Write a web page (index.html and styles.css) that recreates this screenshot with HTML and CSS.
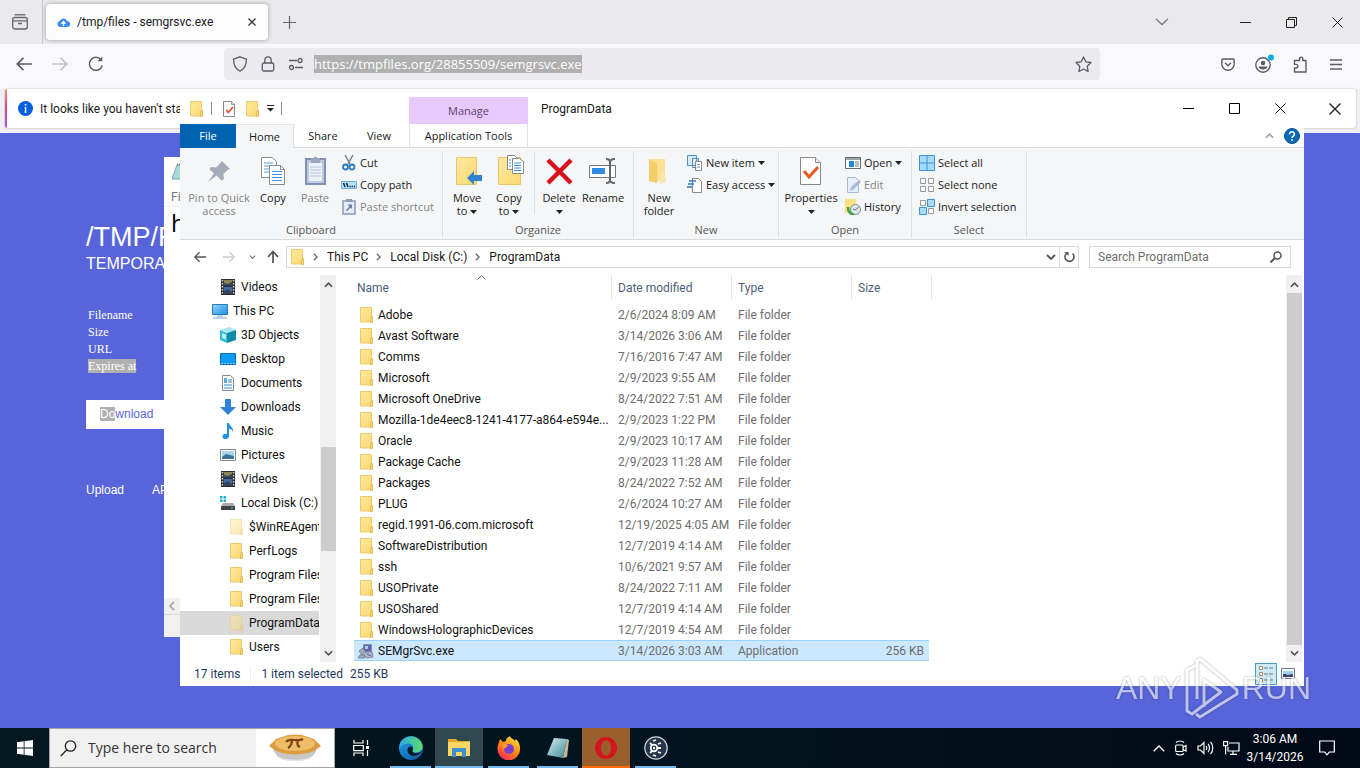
FILE: index.html
```html
<!DOCTYPE html>
<html lang="en">
<head>
<meta charset="utf-8">
<title>Desktop</title>
<link rel="stylesheet" href="styles.css">
</head>
<body>
<svg class="defs" width="0" height="0" aria-hidden="true">
  <defs>
    <linearGradient id="gFold" x1="0" y1="0" x2="1" y2="1"><stop offset="0" stop-color="#ffe9a2"/><stop offset="1" stop-color="#fbd970"/></linearGradient>
    <linearGradient id="gEdge" x1="0" y1="0" x2="1" y2="1"><stop offset="0" stop-color="#1b9de2"/><stop offset="1" stop-color="#0c59a4"/></linearGradient>
    <linearGradient id="gEdge2" x1="0" y1="0" x2="1" y2="0"><stop offset="0" stop-color="#2aa9e8"/><stop offset="1" stop-color="#5fdc6a"/></linearGradient>
    <linearGradient id="gFox" x1="0.8" y1="0" x2="0.2" y2="1"><stop offset="0" stop-color="#ffe040"/><stop offset=".5" stop-color="#ff8a16"/><stop offset="1" stop-color="#f5225c"/></linearGradient>
    <linearGradient id="gScr" x1="0" y1="0" x2="1" y2="1"><stop offset="0" stop-color="#8fd4ff"/><stop offset="1" stop-color="#1d8fe6"/></linearGradient>
    <linearGradient id="gNote" x1="0" y1="0" x2="1" y2="1"><stop offset="0" stop-color="#e2f4f4"/><stop offset=".5" stop-color="#86bcc4"/><stop offset="1" stop-color="#3d8490"/></linearGradient>
    <symbol id="folder" viewBox="0 0 16 16"><path d="M2.500.5h11v14.500h-11z" fill="url(#gFold)" stroke="#ecca6c"/><path d="M12.500 15.500v-4l1-2h1v6z" fill="#f9d974" stroke="#dcb44c" stroke-width=".8"/></symbol>
    <symbol id="check" viewBox="0 0 16 16"><path d="M2.500.5h8l3 3v12h-11z" fill="#fff" stroke="#888"/><path d="M10.500.5v3h3" fill="none" stroke="#999"/><path d="M5 9l2.300 2.500L12 6" fill="none" stroke="#e0562a" stroke-width="1.800"/></symbol>
    <symbol id="film" viewBox="0 0 16 16"><path d="M1 0h14v16H1z" fill="#2d2d30"/><path d="M4 1h8v6H4z" fill="#8a8552"/><path d="M4 8h8v7H4z" fill="#3d6ba8"/><path d="M4 4l4 1 4-2v4H4zM4 12l4-2 4 3v2H4z" fill="#34435c"/><path d="M2.500 1v15M13.500 1v15" stroke="#ddd" stroke-width="1.400" stroke-dasharray="1.500 1.500"/></symbol>
    <symbol id="pc" viewBox="0 0 16 16"><path d="M.5 1.500h15v10H.5z" fill="url(#gScr)" stroke="#2b7cb8"/><path d="M1 15h14M5 13h6" stroke="#6fa5c8" fill="none"/></symbol>
    <symbol id="cube" viewBox="0 0 16 16"><path d="M0 3l9-3 7 3-7 3z" fill="#a7e8f2"/><path d="M0 3l7 3v10l-7-3z" fill="#39b9d3"/><path d="M16 3L7 6v10l9-3z" fill="#0f8ca8"/><path d="M2 6l4 1.500v5L2 11z" fill="#b5f1f7"/></symbol>
    <symbol id="desk" viewBox="0 0 16 16"><path d="M.5 2.500h15v11H.5z" fill="#109af5" stroke="#0870bd"/><path d="M1 12.500h14" stroke="#7fd0ff" stroke-dasharray="2 1"/></symbol>
    <symbol id="doc" viewBox="0 0 16 16"><path d="M2.500.5h8l3 3v12h-11z" fill="#fff" stroke="#888"/><path d="M8 5h4M8 7h4M4 10h8M4 13h8" stroke="#2b88c8"/><path d="M4 3h3v5H4z" fill="#6ba7d0"/></symbol>
    <symbol id="down" viewBox="0 0 16 16"><path d="M5 0h6v8h5l-8 8-8-8h5z" fill="#2f83d6"/></symbol>
    <symbol id="music" viewBox="0 0 16 16"><path d="M7 0h2c0 3 5 4 4 9-.5-2-2-3-4-3.500V13c0 4-7 4-6.500.5C2.800 11 5 10.500 7 11z" fill="#2590dc"/></symbol>
    <symbol id="pic" viewBox="0 0 16 16"><path d="M.5 2.500h15v11H.5z" fill="#fff" stroke="#888"/><path d="M2 4h12v8H2z" fill="#a7d8ee"/><path d="M2 10l4-3 8 2v3H2z" fill="#3c7694"/></symbol>
    <symbol id="disk" viewBox="0 0 16 16"><path d="M0 1h2.500v2.500H0zM3.500 1H6v2.500H3.500zM0 4.500h2.500V7H0zM3.500 4.500H6V7H3.500z" fill="#19b0d6"/><path d="M3 8h10l2 3H1z" fill="#a9adb0"/><path d="M1 11h14v4H1z" fill="#3f4448"/><path d="M11 13h2" stroke="#5fe07a"/></symbol>
    <symbol id="exe" viewBox="0 0 16 16"><path d="M5.500 1.500h8v7h-8z" fill="#5869b5" stroke="#8990a5"/><path d="M7 3h3v3H7z" fill="#b8c9f2"/><path d="M1 8l4-3 2 3-3 4zM2 12h5v3H0z" fill="#a4aebc" stroke="#606c85" stroke-width=".7"/><path d="M8 9h6l1 5-6 1-3-3z" fill="#b4b9c8" stroke="#69748d" stroke-width=".8"/><path d="M9 11l4 2" stroke="#4761a3"/></symbol>
    <symbol id="car" viewBox="0 0 7 4"><path d="M0 0h7L3.500 4z" fill="#222"/></symbol>
    <symbol id="up" viewBox="0 0 10 6"><path d="M1 5l4-4 4 4" fill="none" stroke="currentColor" stroke-width="1.800"/></symbol>
    <symbol id="dn" viewBox="0 0 10 6"><path d="M1 1l4 4 4-4" fill="none" stroke="currentColor" stroke-width="1.800"/></symbol>
    <symbol id="rt" viewBox="0 0 6 10"><path d="M1 1l4 4-4 4" fill="none" stroke="currentColor" stroke-width="1.600"/></symbol>
    <symbol id="larr" viewBox="0 0 16 16"><path d="M15 8H2M7.500 2.500L2 8l5.500 5.500" fill="none" stroke="currentColor" stroke-width="1.500"/></symbol>
    <symbol id="rarr" viewBox="0 0 16 16"><path d="M1 8h13M8.500 2.500L14 8l-5.500 5.500" fill="none" stroke="currentColor" stroke-width="1.500"/></symbol>
  </defs>
</svg>

<main class="desktop">
  <section class="browser" aria-label="Browser">
    <header class="tabbar">
      <button class="recent" aria-label="Recent browsing"><svg width="16" height="16" viewBox="0 0 16 16" fill="none" stroke="#66666e" stroke-width="1.300"><path d="M2.500.8h11"/><rect x=".7" y="3.500" width="14.600" height="11.500" rx="2"/><path d="M.7 6.800h14.600M6 9.500h4"/></svg></button>
      <div class="tab">
        <svg width="13" height="10" viewBox="0 0 13 10"><path d="M3 10a3 3 0 01-.3-5.900A4 4 0 0110.200 4 3 3 0 0110 10z" fill="#3b8df2"/><path d="M6.500 9V4.500M4.500 6.500l2-2 2 2" stroke="#fff" fill="none" stroke-width="1.300"/></svg>
        <span>/tmp/files - semgrsvc.exe</span>
        <button aria-label="Close tab"><svg width="8" height="8" viewBox="0 0 8 8"><path d="M.5.5l7 7M7.500.5l-7 7" stroke="#333" stroke-width="1.300"/></svg></button>
      </div>
      <button class="newtab" aria-label="New tab"><svg width="13" height="13" viewBox="0 0 13 13"><path d="M6.500 0v13M0 6.500h13" stroke="#66666e" stroke-width="1.200"/></svg></button>
      <button class="alltabs" aria-label="List all tabs"><svg width="14" height="8" viewBox="0 0 14 8"><path d="M1 1l6 5.500L13 1" fill="none" stroke="#77777f" stroke-width="1.300"/></svg></button>
      <div class="winctl">
        <button aria-label="Minimize"><svg width="11" height="11"><path d="M0 5.500h11" stroke="#222"/></svg></button>
        <button aria-label="Restore"><svg width="11" height="11" fill="none" stroke="#222"><path d="M.5 2.500h8v8h-8zM2.500 2V.5h8v8H9"/></svg></button>
        <button aria-label="Close"><svg width="11" height="11"><path d="M.5.5l10 10M10.500.5l-10 10" stroke="#222"/></svg></button>
      </div>
    </header>
    <div class="navbar">
      <button class="nb" aria-label="Back"><svg width="18" height="18"><use href="#larr"/></svg></button>
      <button class="nb off" aria-label="Forward"><svg width="18" height="18"><use href="#rarr"/></svg></button>
      <button class="nb" aria-label="Reload"><svg width="16" height="16" viewBox="0 0 16 16" fill="none" stroke="currentColor" stroke-width="1.500"><path d="M14.200 9.500A6.500 6.500 0 1113 3.700"/><path d="M14.300.5v4.800H9.500z" fill="currentColor" stroke="none"/></svg></button>
      <div class="urlbar">
        <svg width="16" height="16" viewBox="0 0 16 16" fill="none" stroke="currentColor" stroke-width="1.300"><path d="M8 .8l6.500 2.300c0 6-1.500 9.500-6.500 12.200C3 12.600 1.500 9.100 1.500 3.100z"/></svg>
        <svg width="16" height="16" viewBox="0 0 16 16" fill="none" stroke="currentColor" stroke-width="1.300"><rect x="2.300" y="7" width="11.400" height="8" rx="1.500"/><path d="M4.800 7V4a3.200 3.200 0 016.400 0v3"/></svg>
        <svg width="16" height="16" viewBox="0 0 16 16" fill="none" stroke="currentColor" stroke-width="1.300"><path d="M1 4.500h8M7 11.500h8"/><circle cx="12" cy="4.500" r="2"/><circle cx="3.500" cy="11.500" r="2"/></svg>
        <input class="url" type="text" aria-label="Address" value="https://tmpfiles.org/28855509/semgrsvc.exe">
        <button class="star" aria-label="Bookmark"><svg width="17" height="17" viewBox="0 0 17 17" fill="none" stroke="currentColor" stroke-width="1.300" stroke-linejoin="round"><path d="M8.500 1l2.300 4.800 5.200.7-3.800 3.700.9 5.300-4.600-2.500-4.600 2.500.9-5.300L1 6.500l5.200-.7z"/></svg></button>
      </div>
      <div class="tools">
        <button aria-label="Save to Pocket"><svg width="14" height="13" viewBox="0 0 14 13" fill="none" stroke="currentColor" stroke-width="1.400"><path d="M2 1h10a1.200 1.200 0 011.200 1.200V6a6.200 6.200 0 01-12.400 0V2.200A1.200 1.200 0 012 1z"/><path d="M4 4.800l3 2.900 3-2.900"/></svg></button>
        <button class="acct" aria-label="Account"><svg width="20" height="20" viewBox="0 0 20 20"><circle cx="9" cy="11" r="7.200" fill="none" stroke="currentColor" stroke-width="1.400"/><circle cx="9" cy="9" r="2.300" fill="currentColor"/><path d="M4.500 12.500h9c-.5 4-8.500 4-9 0z" fill="currentColor"/><circle cx="17" cy="3.500" r="3" fill="#00b3e6"/></svg></button>
        <button aria-label="Extensions"><svg width="16" height="17" viewBox="0 0 16 17" fill="none" stroke="currentColor" stroke-width="1.400"><path d="M5 4.500h2.500V3a1.700 1.700 0 013.400 0v1.500H14V16H2.500v-4H4a1.800 1.800 0 000-3.600H2.500V4.500z"/></svg></button>
        <button aria-label="Menu"><svg width="12" height="11" viewBox="0 0 12 11"><path d="M0 1h12M0 5.500h12M0 10h12" stroke="currentColor" stroke-width="1.300"/></svg></button>
      </div>
    </div>
    <div class="notice">
      <svg width="15" height="15" viewBox="0 0 15 15"><circle cx="7.500" cy="7.500" r="7.500" fill="#0560df"/><path d="M7.500 6v6M7.500 3v1.500" stroke="#fff" stroke-width="1.500"/></svg>
      <span>It looks like you haven't sta</span>
      <button aria-label="Close message"><svg width="12" height="12"><path d="M.5.5l11 11M11.500.5l-11 11" stroke="#222" stroke-width="1.400"/></svg></button>
    </div>
    <article class="page">
      <h1>/TMP/F</h1>
      <h2>TEMPORA</h2>
      <table class="meta"><tbody>
        <tr><th>Filename</th></tr><tr><th>Size</th></tr><tr><th>URL</th></tr><tr><th><mark>Expires at</mark></th></tr>
      </tbody></table>
      <a class="dl" href="#"><mark>Do</mark>wnload</a>
      <nav class="links"><a href="#">Upload</a><a href="#">AP</a></nav>
    </article>
  </section>

  <section class="notepad" aria-label="Notepad">
    <div class="ntitle"><svg width="16" height="18" viewBox="0 0 16 18"><path d="M5 2h9l-2 14H0z" fill="#a5dcd8" stroke="#7aa8a8"/><path d="M5 1.500h9" stroke="#777" stroke-dasharray="1 1" stroke-width="2"/></svg></div>
    <div class="nmenu">Fi</div>
    <div class="ntext">h</div>
    <div class="nscroll"><svg width="6" height="10" viewBox="0 0 6 10"><path d="M5 1L1 5l4 4" fill="none" stroke="#999" stroke-width="1.500"/></svg></div>
    <div class="nstat"></div>
  </section>

  <section class="explorer" aria-label="File Explorer">
    <header class="title">
      <div class="qa">
        <svg width="16" height="16"><use href="#folder"/></svg><i></i>
        <svg width="16" height="16"><use href="#check"/></svg>
        <svg width="16" height="16"><use href="#folder"/></svg>
        <svg width="7" height="7" viewBox="0 0 7 7"><path d="M0 .5h7" stroke="#222"/><path d="M0 3h7L3.500 6.500z" fill="#222"/></svg><i></i>
      </div>
      <div class="manage">Manage</div>
      <div class="name">ProgramData</div>
      <div class="ctl">
        <button aria-label="Minimize"><svg width="11" height="11"><path d="M0 5.500h11" stroke="#000"/></svg></button>
        <button aria-label="Maximize"><svg width="11" height="11"><path d="M.5.5h10v10H.5z" fill="none" stroke="#000"/></svg></button>
        <button aria-label="Close"><svg width="11" height="11"><path d="M.5.5l10 10M10.500.5l-10 10" stroke="#000"/></svg></button>
      </div>
    </header>
    <nav class="rtabs">
      <button class="file">File</button><button class="on">Home</button><button>Share</button><button>View</button><button class="app">Application Tools</button>
      <span class="help"><svg width="9" height="6" color="#a0a0a0"><use href="#up"/></svg><svg width="16" height="16" viewBox="0 0 16 16"><circle cx="8" cy="8" r="7.500" fill="#0a68b8" stroke="#08508c"/><path d="M5.600 6.200a2.400 2.400 0 114 1.700C8.600 8.600 8 9 8 10" fill="none" stroke="#fff" stroke-width="1.600"/><path d="M7.200 11.300h1.700v1.500H7.200z" fill="#fff"/></svg></span>
    </nav>
    <div class="ribbon">
      <div class="grp g1"><div class="items">
        <button class="big dis"><svg width="32" height="32" viewBox="0 0 32 32"><path d="M19 6l8 8-2.500 1-4 4 .5 5-2.500 1.500-5-5L5 27l6-8.500-4.500-4.500L8 12l5 .5 4-4z" fill="#a3acb8"/></svg><span>Pin to Quick<br>access</span></button>
        <button class="big"><svg width="32" height="32" viewBox="0 0 32 32"><path d="M4.500 2.500h11l4 4v16h-15z" fill="#fff" stroke="#8a8a8a"/><path d="M7 8h9M7 11h6M7 14h6M7 17h6" stroke="#5ba2dc"/><path d="M12.500 10.500h11l4 4v15h-15z" fill="#fff" stroke="#8a8a8a"/><path d="M23.500 10.500v4h4" fill="none" stroke="#8a8a8a"/><path d="M15 16.500h10M15 19.500h10M15 22.500h10M15 25.500h10" stroke="#3b8fd6"/></svg><span>Copy</span></button>
        <button class="big dis"><svg width="32" height="32" viewBox="0 0 32 32"><path d="M7 4h19v25H7z" fill="#bdc9e0" stroke="#8190b4" stroke-width="2"/><path d="M10 8h13v18H10z" fill="#eef1f8"/><path d="M11 12h11M11 15h11M11 18h11M11 21h11" stroke="#b5c0d8"/><path d="M12 3h3a1.500 1.500 0 013 0h3v5h-9z" fill="#98a4bb"/></svg><span>Paste</span></button>
        <div class="small">
          <button><svg width="16" height="16" viewBox="0 0 16 16"><path d="M4 0l5 9M12 0L7 9" stroke="#7a7f86" stroke-width="1.500" fill="none"/><circle cx="4.500" cy="12" r="2.500" fill="none" stroke="#2b7cc4" stroke-width="1.800"/><circle cx="11" cy="12" r="2.500" fill="none" stroke="#2b7cc4" stroke-width="1.800"/></svg>Cut</button>
          <button><svg width="16" height="16" viewBox="0 0 16 16"><path d="M.5 4.500h15v7H.5z" fill="#b5dcf7" stroke="#6bb1e4"/><path d="M2.500 6L4 10M5.500 6L7 10M8.500 9.500h1.200M10.700 9.500h1.200M12.900 9.500h1.200" stroke="#123" stroke-width="1.400"/></svg>Copy path</button>
          <button class="dis"><svg width="16" height="16" viewBox="0 0 16 16"><path d="M2 2h12v13H2z" fill="#e7ebf5" stroke="#8c99bb" stroke-width="1.500"/><path d="M5 0h6v3H5z" fill="#8c99bb"/><path d="M5.500 11.500l4-4" stroke="#6c7ba5" stroke-width="1.600"/><path d="M6.500 5.500H11V10z" fill="#6c7ba5"/></svg>Paste shortcut</button>
        </div></div><div class="lab">Clipboard</div></div>
      <div class="grp g2"><div class="items">
        <button class="big"><svg width="32" height="32" viewBox="0 0 32 32"><path d="M5.500 2.500h20v27h-20z" fill="url(#gFold)" stroke="#e6c669"/><path d="M16 23l7-7v4h8v6h-8v4z" fill="#2f83ce"/></svg><span>Move<br>to <svg width="7" height="4"><use href="#car"/></svg></span></button>
        <button class="big"><svg width="32" height="32" viewBox="0 0 32 32"><path d="M5.500 2.500h22v27h-22z" fill="url(#gFold)" stroke="#e6c669"/><path d="M14.500.5h7l3 3v11h-10z" fill="#fff" stroke="#888"/><path d="M19.500 3.500h7l4 3v12h-11z" fill="#fff" stroke="#888"/><path d="M21 8h7M21 10.500h7M21 13h7M21 15.500h7M16 5h2M16 8h2M16 11h2" stroke="#3b8fd6"/></svg><span>Copy<br>to <svg width="7" height="4"><use href="#car"/></svg></span></button>
        <i class="vs"></i>
        <button class="big"><svg width="32" height="32" viewBox="0 0 32 32"><path d="M5 5l23 23M28 5L5 28" stroke="#d8121c" stroke-width="4.500"/></svg><span>Delete<br><svg width="7" height="4"><use href="#car"/></svg></span></button>
        <button class="big"><svg width="32" height="32" viewBox="0 0 32 32"><path d="M2.500 10.500h26v12h-26z" fill="#fff" stroke="#777"/><path d="M5 13h13v6H5z" fill="#2f8be0"/><path d="M19 4c3 0 4 1 4 3v18c0 2-1 3-4 3M28 4c-3 0-5 1-5 3v18c0 2 2 3 5 3" fill="none" stroke="#666" stroke-width="2"/></svg><span>Rename</span></button>
      </div><div class="lab">Organize</div></div>
      <div class="grp g3"><div class="items">
        <button class="big"><svg width="32" height="32" viewBox="0 0 32 32"><path d="M6 4h16v22H6z" fill="#fbe194"/><path d="M6 4l8 5v19l-8-2z" fill="#f4ce67"/><path d="M17 29V19l4-3 2 11z" fill="#fae6ab"/></svg><span>New<br>folder</span></button>
        <div class="small">
          <button><svg width="16" height="16" viewBox="0 0 16 16"><path d="M.5.5h9v10h-9zM5.500 3.500h6v9h-6z" fill="#d7ebfa" stroke="#5193c7"/><path d="M8.500 6.500h6v9h-6z" fill="#fff" stroke="#888"/><path d="M10 9.500h3M10 12h3" stroke="#888"/></svg>New item <svg width="7" height="4"><use href="#car"/></svg></button>
          <button><svg width="16" height="16" viewBox="0 0 16 16"><path d="M5.500 1.500h6l3 3v11h-9z" fill="#fff" stroke="#888"/><path d="M2 4h7M1 7h6M0 10h5" stroke="#2779c4" stroke-width="1.300"/></svg>Easy access <svg width="7" height="4"><use href="#car"/></svg></button>
        </div></div><div class="lab">New</div></div>
      <div class="grp g4"><div class="items">
        <button class="big"><svg width="32" height="32" viewBox="0 0 32 32"><path d="M5.500 2.500h15l5 5v22h-20z" fill="#fff" stroke="#888"/><path d="M20.500 2.500v5h5" fill="#eee" stroke="#888"/><path d="M9 16l5 6 9-10" fill="none" stroke="#e65a22" stroke-width="3"/></svg><span>Properties<br><svg width="7" height="4"><use href="#car"/></svg></span></button>
        <div class="small">
          <button><svg width="16" height="16" viewBox="0 0 16 16"><path d="M.5 2.500h15v11H.5z" fill="#fff" stroke="#666"/><path d="M1 3h14v2H1z" fill="#9aa"/><path d="M4 6h5v6H4z" fill="#1c86de"/><path d="M10 7h4M10 9h4M10 11h4" stroke="#777"/></svg>Open <svg width="7" height="4"><use href="#car"/></svg></button>
          <button class="dis"><svg width="16" height="16" viewBox="0 0 16 16"><path d="M2.500.5h8l3 3v12h-11z" fill="#e8effa" stroke="#a8b8d2"/><path d="M5 14l1-4 8-7 2 2-8 8z" fill="#a9bcd8"/></svg>Edit</button>
          <button><svg width="16" height="16" viewBox="0 0 16 16"><path d="M0 0h11v14H0z" fill="#fbdf82"/><circle cx="10.500" cy="10.500" r="5" fill="#dfe7ea" stroke="#7f8a8f"/><path d="M10.500 11l3-3M10.500 11L8 10" stroke="#567"/><path d="M3 8c0 5 2 7 6 7.500" fill="none" stroke="#3aa542" stroke-width="2.500"/></svg>History</button>
        </div></div><div class="lab">Open</div></div>
      <div class="grp g5"><div class="items">
        <div class="small">
          <button><svg width="16" height="16" viewBox="0 0 16 16"><path d="M.5.5h15v15H.5zM8 0v16M0 8h16" fill="#a6dbff" stroke="#3a93d4"/></svg>Select all</button>
          <button><svg width="16" height="16" viewBox="0 0 16 16"><path d="M1.500 1.500h5v5h-5zM9.500 1.500h5v5h-5zM1.500 9.500h5v5h-5zM9.500 9.500h5v5h-5z" fill="#fff" stroke="#9a9a9a"/></svg>Select none</button>
          <button><svg width="16" height="16" viewBox="0 0 16 16"><path d="M1.500 1.500h5v5h-5zM9.500 9.500h5v5h-5z" fill="#fff" stroke="#9a9a9a"/><path d="M8.500.5h7v7h-7zM.5 8.500h7v7h-7z" fill="#a6dbff" stroke="#3a93d4"/></svg>Invert selection</button>
        </div></div><div class="lab">Select</div></div>
    </div>
    <div class="addr">
      <button aria-label="Back"><svg width="14" height="14" color="#555"><use href="#larr"/></svg></button>
      <button aria-label="Forward"><svg width="14" height="14" color="#ccc"><use href="#rarr"/></svg></button>
      <button class="hist" aria-label="Recent locations"><svg width="7" height="4" viewBox="0 0 10 6" color="#777"><use href="#dn"/></svg></button>
      <button class="upb" aria-label="Up"><svg width="12" height="14" viewBox="0 0 12 14"><path d="M6 13V2M1 7l5-5.500L11 7" fill="none" stroke="#555" stroke-width="1.700"/></svg></button>
      <div class="crumbs">
        <svg width="16" height="16"><use href="#folder"/></svg>
        <svg class="sep" width="5" height="8"><use href="#rt"/></svg><a href="#">This PC</a>
        <svg class="sep" width="5" height="8"><use href="#rt"/></svg><a href="#">Local Disk (C:)</a>
        <svg class="sep" width="5" height="8"><use href="#rt"/></svg><a href="#">ProgramData</a>
        <button class="drop" aria-label="Previous locations"><svg width="10" height="6" color="#555"><use href="#dn"/></svg></button>
        <button class="ref" aria-label="Refresh"><svg width="12" height="12" viewBox="0 0 12 12"><path d="M9.500 2.500a4.500 4.500 0 11-6 0" fill="none" stroke="#555" stroke-width="1.600"/><path d="M1.500 1h4v4z" fill="#555"/></svg></button>
      </div>
      <div class="search"><input type="search" aria-label="Search ProgramData" placeholder="Search ProgramData"><svg width="12" height="12" viewBox="0 0 12 12" fill="none" stroke="#555" stroke-width="1.500"><circle cx="7.500" cy="4.500" r="3.500"/><path d="M5 7l-4.500 4.500" stroke-width="2"/></svg></div>
    </div>
    <div class="body">
      <div class="tree">
        <ul>
          <li class="l2"><svg width="16" height="16"><use href="#film"/></svg>Videos</li>
          <li class="l1"><svg width="16" height="16"><use href="#pc"/></svg>This PC</li>
          <li class="l2"><svg width="16" height="16"><use href="#cube"/></svg>3D Objects</li>
          <li class="l2"><svg width="16" height="16"><use href="#desk"/></svg>Desktop</li>
          <li class="l2"><svg width="16" height="16"><use href="#doc"/></svg>Documents</li>
          <li class="l2"><svg width="16" height="16"><use href="#down"/></svg>Downloads</li>
          <li class="l2"><svg width="16" height="16"><use href="#music"/></svg>Music</li>
          <li class="l2"><svg width="16" height="16"><use href="#pic"/></svg>Pictures</li>
          <li class="l2"><svg width="16" height="16"><use href="#film"/></svg>Videos</li>
          <li class="l2"><svg width="16" height="16"><use href="#disk"/></svg>Local Disk (C:)</li>
          <li class="l3 hid"><svg width="16" height="16"><use href="#folder"/></svg>$WinREAgent</li>
          <li class="l3"><svg width="16" height="16"><use href="#folder"/></svg>PerfLogs</li>
          <li class="l3"><svg width="16" height="16"><use href="#folder"/></svg>Program Files</li>
          <li class="l3"><svg width="16" height="16"><use href="#folder"/></svg>Program Files</li>
          <li class="l3 hid cur"><svg width="16" height="16"><use href="#folder"/></svg>ProgramData</li>
          <li class="l3"><svg width="16" height="16"><use href="#folder"/></svg>Users</li>
        </ul>
        <div class="sb s1"><svg width="9" height="6"><use href="#up"/></svg><span class="thumb"></span><svg width="9" height="6"><use href="#dn"/></svg></div>
      </div>
      <div class="files">
        <svg class="sort" width="9" height="5" viewBox="0 0 9 5"><path d="M.5 4.500l4-4 4 4" fill="none" stroke="#666"/></svg>
        <table class="list">
          <colgroup><col class="c1"><col class="c2"><col class="c2"><col class="c4"></colgroup>
          <thead><tr><th>Name</th><th>Date modified</th><th>Type</th><th>Size</th></tr></thead>
          <tbody id="rows"></tbody>
        </table>
      </div>
      <div class="sb s2"><svg width="9" height="6"><use href="#up"/></svg><span class="thumb"></span><svg width="9" height="6"><use href="#dn"/></svg></div>
    </div>
    <footer class="status"><span class="n">17 items</span><span class="sel">1 item selected</span><span>255 KB</span>
      <span class="views"><button class="on" aria-label="Details view"><svg width="16" height="16" viewBox="0 0 16 16" fill="none" stroke="#777"><path d="M1.500.5h3v3h-3zM1.500 6.500h3v3h-3zM1.500 12.500h3v3h-3z" fill="#fff" stroke="#a86"/><path d="M6 2h4M11 2h4M6 8h4M11 8h4M6 14h4M11 14h4"/></svg></button><button aria-label="Large icons"><svg width="14" height="12" viewBox="0 0 14 12"><path d="M.5.5h13v10H.5z" fill="#fff" stroke="#67a"/><path d="M2 3h10v5H2z" fill="#9fd0ee"/><path d="M2 6h3l1 1 6-1v3H2z" fill="#446"/></svg></button></span>
    </footer>
  </section>

  <div class="watermark"><span>ANY</span><svg width="54" height="62" viewBox="0 0 54 62" fill="none" stroke="#fff" stroke-width="3" stroke-linejoin="round"><path d="M12 8L2 13v41l5 3 29-22-17-12v27"/><path d="M12 42V4l3-2 37 31v4L15 60l-4-3"/></svg><span>RUN</span></div>
</main>

<footer class="taskbar">
  <button class="start" aria-label="Start"><svg width="16" height="16" viewBox="0 0 16 16"><path d="M0 2.200L6.700 1.300v6.300H0zM7.500 1.200L16 0v7.600H7.500zM0 8.400h6.700v6.300L0 13.800zM7.500 8.400H16V16l-8.500-1.200z" fill="#fff"/></svg></button>
  <div class="tsearch">
    <svg width="17" height="17" viewBox="0 0 17 17" fill="none" stroke="#222" stroke-width="1.300"><circle cx="10.500" cy="6" r="5.200"/><path d="M6.800 9.800L.8 16"/></svg>
    <input type="text" aria-label="Search" placeholder="Type here to search">
    <span class="pie"><svg width="54" height="28" viewBox="0 0 54 28"><path d="M5 14c2 8 8 13 22 13s20-5 22-13z" fill="#c9c6c8"/><path d="M9 22c8 5 28 5 36 0-6 7-30 7-36 0z" fill="#e8e5e5"/><path d="M1 12l4-4 3-3 6-2 6-2 7-.5 7 .5 6 2 6 2 3 3 4 4-3 2-4 3-6 2-6 1-7 .5-7-.5-6-1-6-2-4-3z" fill="#dd9d3e"/><ellipse cx="27" cy="9.500" rx="20" ry="7.500" fill="#eebd67"/><path d="M18 8c2-3 5-2 8-2s6 1 9-1M24 6c0 3-1 6-4 8M30 6c-1 3-1 6 2 7" fill="none" stroke="#7c4312" stroke-width="2.200"/></svg></span>
  </div>
  <button class="tb tv" aria-label="Task view"><svg width="16" height="16" viewBox="0 0 16 16" fill="none" stroke="#fff" stroke-width="1.200"><path d="M1 0v3h9V0M.7 5.500h9.600v5.200H.7zM1 16v-3h9v3M14.500 0v5M14.500 10v6"/><path d="M13 6h3v3h-3z" fill="#fff" stroke="none"/></svg></button>
  <button class="tb run" aria-label="Edge"><svg width="24" height="24" viewBox="0 0 24 24"><circle cx="12" cy="12" r="12" fill="url(#gEdge)"/><path d="M.5 10C2-1 19-4 23.500 9c1 5-3 7.500-7 7.500-3 0-4-1.500-2.500-3.500 1-4-2-6-6-5.500C4 8 1.500 10 .5 14z" fill="url(#gEdge2)"/><path d="M14 13c-1.500 2.500 0 4 3 4 2 0 4-.5 5.500-1.500C18 23 8 20 8.500 13.500 9 10 14 9 14 13z" fill="#061c28"/></svg></button>
  <button class="tb run act" aria-label="File Explorer"><svg width="24" height="20" viewBox="0 0 24 20"><path d="M1 1h8l2 2h12v5H1z" fill="#e9a825"/><path d="M1 4h22v14H1z" fill="#ffd767"/><path d="M5 10h14v9h-4v-5H9v5H5z" fill="#3f8fcf"/></svg></button>
  <button class="tb run" aria-label="Firefox"><svg width="24" height="24" viewBox="0 0 24 24"><path d="M2 6l1-3 3 3 3-1c0-3 3-4 4-5 1 3 4 3 5 5l1-2c3 3 4 6 4 9a11.300 11.300 0 11-22.500 0c0-2 .5-4 1.500-6z" fill="url(#gFox)"/><circle cx="12" cy="13" r="5" fill="#7a3fd0"/><path d="M5 9c3-2 5 0 7 1-3 0-3 2-5 3z" fill="#ff9a2a"/></svg></button>
  <button class="tb run" aria-label="Notepad"><svg width="24" height="22" viewBox="0 0 24 22"><path d="M8 1l13 1-4 19L1 18z" fill="url(#gNote)"/><path d="M21 2l-4 19 4-1 2-17z" fill="#c8b89a"/></svg></button>
  <button class="tb run op" aria-label="Opera"><svg width="24" height="24" viewBox="0 0 24 24"><path fill-rule="evenodd" d="M12 1a11 11 0 100 22 11 11 0 000-22zm0 3.500c3 0 5 3.200 5 7.500s-2 7.500-5 7.500-5-3.200-5-7.500 2-7.500 5-7.500z" fill="#d41420"/></svg></button>
  <button class="tb run" aria-label="Tools"><svg width="24" height="24" viewBox="0 0 24 24"><circle cx="12" cy="12" r="11.200" fill="#26364a" stroke="#d3dae0" stroke-width="1.200"/><circle cx="10" cy="12" r="3.300" fill="none" stroke="#fff" stroke-width="1.700"/><path d="M6 7l2 2M6 17l2-2M13 12h4M14 8l3-1M14 16l3 1M9 5l3-1M9 19l3 1" stroke="#fff" stroke-width="1.800"/><circle cx="10" cy="12" r="1.200" fill="#fff"/></svg></button>
  <div class="tray">
    <svg width="12" height="7" viewBox="0 0 12 7"><path d="M.7 6.300L6 1l5.300 5.300" fill="none" stroke="#fff" stroke-width="1.300"/></svg>
    <svg width="14" height="16" viewBox="0 0 14 16" fill="none" stroke="#fff" stroke-width="1.200"><rect x="1.600" y="5" width="7.500" height="6.500" rx="1"/><path d="M9 7l3-1.500v5.500L9 9.500M2 2.500C4 .5 8 .5 10 2.500M2 13.500c2 2 6 2 8 0"/></svg>
    <svg width="17" height="14" viewBox="0 0 17 14" fill="none" stroke="#fff" stroke-width="1.200"><path d="M1 5h2.500L7 1.500v11L3.500 9H1zM9 5c1 1 1 3 0 4M11 3c2 2 2 6 0 8M13.500 1c3 3 3 9 0 12"/></svg>
    <svg width="17" height="14" viewBox="0 0 17 14" fill="none" stroke="#fff" stroke-width="1.200"><path d="M6 2h10v8H5V6M10 10v3M7 13.300h7M.6.600h4v4h-4zM2.600 5v8.500"/></svg>
  </div>
  <div class="clock"><span>3:06 AM</span><span>3/14/2026</span></div>
  <button class="act-c" aria-label="Notifications"><svg width="16" height="16" viewBox="0 0 16 16" fill="none" stroke="#fff" stroke-width="1.200"><path d="M.7 1h14.600v11h-5L8 14.800 5.700 12h-5z"/></svg></button>
</footer>
<script src="app.js"></script>
</body>
</html>
```
FILE: styles.css
```css
* { box-sizing: border-box; }
body { margin: 0; height: 100vh; display: flex; flex-direction: column; overflow: hidden; font: 12px/16px Roboto, "Open Sans", sans-serif; color: #1a1a1a; }
button { border: 0; background: none; padding: 0; font: inherit; color: inherit; display: flex; align-items: center; justify-content: center; }
svg { display: block; flex: none; }
a { color: inherit; text-decoration: none; }
mark { background: #b0b0b0; color: #fff; }
ul { margin: 0; padding: 0; list-style: none; }
.defs { position: absolute; }

.desktop { flex: 1; min-height: 0; position: relative; display: flex; }
.browser { flex: 1; display: flex; flex-direction: column; background: #f0f0f4; }
.tabbar { display: flex; align-items: center; height: 44px; background: #eaeaed; }
.recent { width: 43px; height: 44px; border-right: 1px solid #c8c8cc; padding-right: 2px; }
.tab { display: flex; align-items: center; width: 222px; height: 36px; margin-left: 3px; padding: 0 12px 0 11px; gap: 7px; border-radius: 4px; background: #fcfcfd; box-shadow: 0 0 4px rgba(0, 0, 0, .35); }
.tab button { margin-left: auto; }
.newtab { width: 42px; height: 44px; }
.alltabs { margin-left: auto; width: 40px; height: 44px; }
.winctl { display: flex; margin-left: 40px; }
.winctl button { width: 46px; height: 44px; }
.navbar { display: flex; align-items: center; height: 45px; padding: 0 6px 5px; background: #f9f9fb; color: #5b5b66; }
.nb { width: 36px; height: 32px; }
.off { color: #c0c0c6; }
.urlbar { flex: 1; display: flex; align-items: center; gap: 12px; height: 32px; margin-left: 110px; padding: 0 8px; border-radius: 4px; background: #ebebef; }
.url { width: 268px; field-sizing: content; margin-left: -2px; padding: 0; border: 0; font: 13px/18px "Open Sans", sans-serif; background: #b0b0b0; color: #fff; }
.star { margin-left: auto; }
.tools { display: flex; margin-left: 110px; }
.tools button { width: 36px; height: 32px; }
.notice { display: flex; align-items: center; height: 39px; margin: 0 4px 5px 5px; padding: 0 15px 0 13px; gap: 7px; background: linear-gradient(#f0926a, #d0428e, #9059ff) left / 2px 100% no-repeat #fff; border-radius: 3px; box-shadow: 0 0 2px rgba(0, 0, 0, .3); }
.notice button { margin-left: auto; }
.page { flex: 1; padding: 87px 0 0 86px; background: #5865da; color: #fff; font-family: "Liberation Sans", Arial, sans-serif; }
.page h1 { margin: 0; font-size: 27px; line-height: 34px; font-weight: 400; }
.page h2 { margin: 0; font-size: 16px; line-height: 20px; font-weight: 400; }
.meta { margin: 33px 0 25px; border-spacing: 0; font: 12px/17px "Liberation Serif", serif; }
.meta th { padding: 0 2px; font-weight: 400; text-align: left; }
.dl { display: block; width: 120px; padding: 7px 14px; background: #fff; color: #5865da; line-height: 15px; }
.links { display: flex; gap: 28px; margin-top: 53px; }

.notepad { position: absolute; left: 164px; top: 157px; width: 400px; height: 480px; display: flex; flex-direction: column; background: #fff; }
.ntitle { height: 32px; padding: 6px 8px; }
.nmenu { height: 18px; padding-left: 7px; color: #777; border-bottom: 1px solid #eee; }
.ntext { flex: 1; padding: 1px 7px; font: 24px/30px "Open Sans", sans-serif; color: #000; }
.nscroll { height: 17px; padding: 3px 5px; background: #f0f0f0; border-bottom: 1px solid #d8d8d8; }
.nstat { height: 22px; background: #f0f0f0; }

.explorer { position: absolute; left: 180px; right: 56px; top: 91px; bottom: 42px; display: flex; flex-direction: column; background: #fff; }
.title { display: flex; height: 33px; }
.qa { display: flex; align-items: center; gap: 7px; width: 229px; padding: 2px 0 0 8px; }
.qa i { width: 1px; height: 13px; background: #888; margin-right: 2px; }
.manage { width: 119px; margin-top: 6px; padding-top: 6px; text-align: center; background: #e8c9fd; color: #5a4668; }
.name { flex: 1; padding: 10px 13px; }
.ctl { display: flex; margin-right: 1px; }
.ctl button { width: 46px; height: 35px; }
.rtabs { display: flex; height: 24px; border-bottom: 1px solid #dadbdc; }
.rtabs button { height: 24px; width: 58px; }
.rtabs .file { width: 56px; background: #0063b1; color: #fff; }
.rtabs .on { background: #f5f6f7; border-right: 1px solid #dadbdc; border-top: 1px solid #e4e5e6; }
.rtabs button:nth-child(4) { width: 54px; }
.rtabs .app { width: 119px; height: 23px; margin-left: 3px; border: solid #ead9f5; border-width: 0 1px; }
.help { display: flex; align-items: center; gap: 10px; margin-left: auto; padding-right: 4px; }
.manage, .rtabs, .ribbon { font-family: "Open Sans", sans-serif; font-size: 11px; }
.ribbon { display: flex; height: 92px; background: #f5f6f7; border-bottom: 1px solid #dadbdc; }
.grp { display: flex; flex-direction: column; margin: 3px 0 1px; border-right: 1px solid #e0e1e2; }
.items { display: flex; flex: 1; padding-top: 1px; align-items: flex-start; }
.lab { height: 16px; line-height: 16px; text-align: center; color: #555; }
.g1 { width: 263px; }
.g2 { width: 191px; }
.g3 { width: 145px; }
.g4 { width: 133px; }
.g5 { width: 115px; }
.g1 .items { padding-left: 8px; }
.g2 .items { padding-left: 3px; }
.g3 .items { padding-left: 4px; }
.g4 .items { padding-left: 5px; }
.big { flex-direction: column; justify-content: flex-start; width: 42px; padding-top: 3px; line-height: 13px; white-space: nowrap; }
.big > span { padding-top: 4px; text-align: center; }
.big span svg { display: inline-block; vertical-align: middle; }
.g1 .big:nth-child(1) { width: 62px; }
.g1 .big:nth-child(2) { width: 46px; }
.g1 .big:nth-child(3) { width: 38px; }
.g2 .big:last-child { width: 46px; }
.g4 .big { width: 54px; }
.vs { width: 1px; height: 62px; margin: 0 3px 0 4px; background: #e0e1e2; }
.small { display: flex; flex-direction: column; padding-left: 7px; }
.small button { height: 22px; gap: 3px; justify-content: flex-start; white-space: nowrap; }
.dis { color: #848484; }
.addr { display: flex; align-items: center; height: 34px; padding: 0 13px 0 5px; }
.addr > button { width: 29px; height: 22px; }
.addr .hist { width: 18px; }
.addr .upb { width: 24px; }
.crumbs { flex: 1; display: flex; align-items: center; height: 22px; margin-left: 1px; padding-left: 2px; border: 1px solid #d9d9d9; }
.crumbs .sep { margin: 0 9px 0 8px; color: #666; }
.drop { margin-left: auto; width: 17px; height: 20px; }
.ref { width: 19px; height: 20px; border-left: 1px solid #d9d9d9; }
.search { display: flex; align-items: center; width: 202px; height: 22px; margin-left: 10px; padding: 0 8px; border: 1px solid #d9d9d9; }
.search input { flex: 1; min-width: 0; border: 0; padding: 0; outline: 0; font: inherit; background: none; }
.search input::placeholder { color: #6d6d6d; opacity: 1; }
.body { flex: 1; min-height: 0; display: flex; padding-top: 1px; }
.tree { display: flex; width: 156px; }
.tree ul { flex: 1; min-width: 0; overflow: hidden; margin-right: 1px; }
.tree li { display: flex; align-items: center; gap: 5px; height: 24px; white-space: nowrap; color: #111; }
.tree .l1 { padding-left: 32px; }
.tree .l2 { padding-left: 40px; }
.tree .l3 { padding-left: 48px; }
.hid svg { opacity: .5; }
.cur { background: #d9d9d9; }
.sb { display: flex; flex-direction: column; justify-content: space-between; align-items: center; width: 16px; padding: 7px 0 6px; background: #f0f0f0; color: #505050; }
.thumb { width: 15px; background: #cdcdcd; }
.s1 .thumb { height: 104px; margin: auto 0 99px; }
.s2 .thumb { flex: 1; margin: 5px 0; }
.s2 { margin-right: 2px; }
.files { flex: 1; position: relative; padding-left: 18px; }
.sort { position: absolute; left: 141px; top: 0; }
.list { table-layout: fixed; width: 578px; border-spacing: 0; color: #6d6d6d; }
.c1 { width: 258px; }
.c2 { width: 120px; }
.c4 { width: 80px; }
.list th { height: 25px; padding: 0 6px; border-right: 1px solid #e5e5e5; font-weight: 400; text-align: left; color: #4c607a; }
.list th:first-child { padding-left: 3px; }
.list tbody::before { content: ""; display: block; height: 4px; }
.list td { height: 21px; padding: 0 6px; white-space: nowrap; overflow: hidden; }
.list td:first-child { padding: 0 0 0 4px; color: #111; }
.fn { display: flex; align-items: center; gap: 4px; }
.list td:last-child { border-right: 3px solid transparent; background-clip: padding-box; text-align: right; padding-right: 5px; }
.picked td { background-color: #cce8ff; box-shadow: inset 0 1px #99d1ff, inset 0 -1px #99d1ff; }
.status { display: flex; height: 24px; align-items: center; padding-left: 14px; color: #1e395b; }
.n { padding-right: 10px; border-right: 1px solid #eee; margin-right: 10px; }
.sel { margin-right: 7px; }
.views { display: flex; margin-left: auto; padding-right: 5px; }
.views button { width: 22px; height: 22px; }
.views .on { background: #ccebf8; border: 1px solid #4a9cc4; }

.watermark { position: absolute; right: 49px; top: 657px; display: flex; align-items: center; gap: 3px; color: #fff; font: 32px/62px "Liberation Sans Narrow", "Liberation Sans", sans-serif; filter: drop-shadow(0 0 1px rgba(0, 0, 0, .6)); opacity: .6; pointer-events: none; }

.taskbar { display: flex; height: 40px; background: linear-gradient(90deg, #02171f, #02141f 50%, #020a18); color: #fff; }
.start { width: 49px; }
.tsearch { display: flex; align-items: center; width: 286px; padding-left: 10px; gap: 11px; border: 1px solid #a6a6a6; background: #f1f1f1; }
.tsearch input { flex: 1; min-width: 0; border: 0; padding: 0; outline: 0; background: none; font: 14px/20px "Open Sans", sans-serif; }
.tsearch input::placeholder { color: #333; opacity: 1; }
.pie { display: flex; align-items: center; justify-content: center; width: 78px; height: 38px; background: #fff; }
.tb { width: 49px; border: solid transparent; border-width: 0 4px; background-clip: padding-box; }
.run { background: linear-gradient(#76b9ed, #76b9ed) bottom / 100% 2px no-repeat; background-clip: padding-box; }
.tv { width: 51px; }
.act { border-width: 0 1px 0 0; background-color: #304850; }
.op { border-width: 0 1px 0 0; background-color: #98602c; background-image: linear-gradient(#ff6a00, #ff6a00); }
.tray { display: flex; align-items: center; gap: 9px; margin-left: auto; }
.clock { display: flex; flex-direction: column; justify-content: center; align-items: center; width: 70px; line-height: 18px; }
.act-c { width: 34px; margin-right: 16px; }
```
FILE: app.js
```javascript
const files = [
  ["Adobe", "2/6/2024 8:09 AM"],
  ["Avast Software", "3/14/2026 3:06 AM"],
  ["Comms", "7/16/2016 7:47 AM"],
  ["Microsoft", "2/9/2023 9:55 AM"],
  ["Microsoft OneDrive", "8/24/2022 7:51 AM"],
  ["Mozilla-1de4eec8-1241-4177-a864-e594e...", "2/9/2023 1:22 PM"],
  ["Oracle", "2/9/2023 10:17 AM"],
  ["Package Cache", "2/9/2023 11:28 AM"],
  ["Packages", "8/24/2022 7:52 AM"],
  ["PLUG", "2/6/2024 10:27 AM"],
  ["regid.1991-06.com.microsoft", "12/19/2025 4:05 AM"],
  ["SoftwareDistribution", "12/7/2019 4:14 AM"],
  ["ssh", "10/6/2021 9:57 AM"],
  ["USOPrivate", "8/24/2022 7:11 AM"],
  ["USOShared", "12/7/2019 4:14 AM"],
  ["WindowsHolographicDevices", "12/7/2019 4:54 AM"],
  ["SEMgrSvc.exe", "3/14/2026 3:03 AM", "Application", "256 KB"]
];
document.getElementById("rows").innerHTML = files.map(([name, date, type, size]) =>
  `<tr${type ? ' class="picked"' : ""}><td><span class="fn"><svg width="16" height="16"><use href="#${type ? "exe" : "folder"}"/></svg>${name}</span></td><td>${date}</td><td>${type || "File folder"}</td><td>${size || ""}</td></tr>`
).join("");
```
